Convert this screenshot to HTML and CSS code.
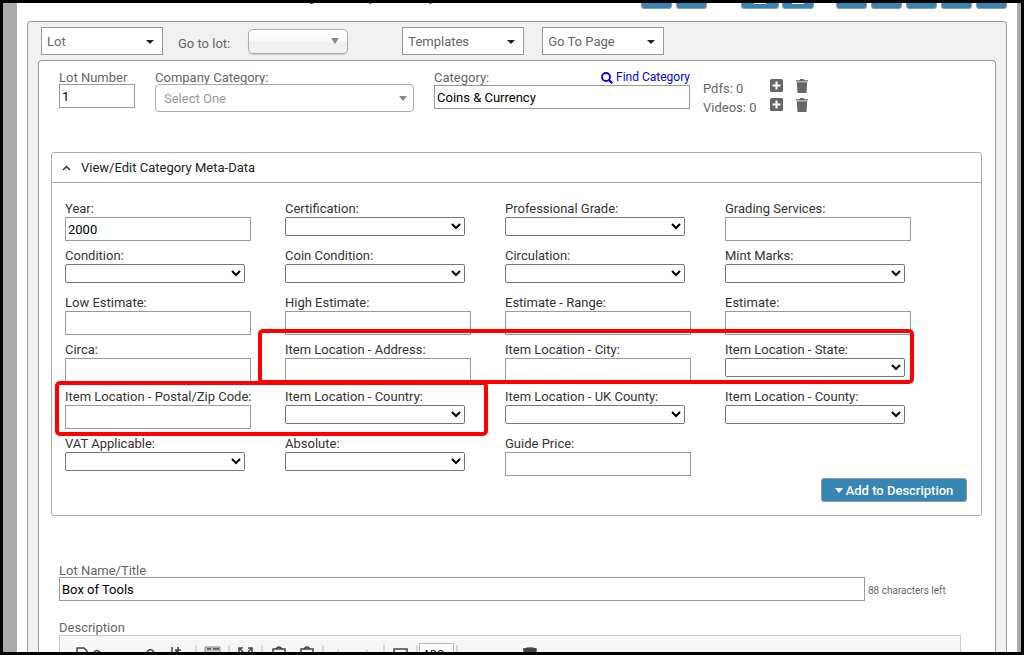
FILE: index.html
```
<!DOCTYPE html>
<html lang="en">
<head>
<meta charset="UTF-8">
<title>Edit Lot</title>
<meta content="width=device-width,initial-scale=1.0" name="viewport">
<link rel="stylesheet" href="styles.css">
</head>
<body>
<svg class="defs" aria-hidden="true">
    <symbol id="i-plus" viewBox="0 0 13 13"><path fill-rule="evenodd" d="M1.5 0h10A1.5 1.5 0 0 1 13 1.500v10a1.500 1.500 0 0 1-1.500 1.500h-10A1.500 1.500 0 0 1 0 11.500v-10A1.500 1.500 0 0 1 1.500 0zM5.500 2.500v3h-3v2h3v3h2v-3h3v-2h-3v-3z"/></symbol>
    <symbol id="i-trash" viewBox="0 0 12 14"><path d="M0 1.200h3.500L4.300 0h3.400l.8 1.200H12v1.300H0zM.8 3.300h10.400L10.500 14h-9z"/></symbol>
</svg>
<div id="page">
    <div id="header">
        <h1>Lot Update (Item 1)</h1>
        <div class="actions">
            <button type="button" aria-label="Previous"></button>
            <button type="button" aria-label="Next"></button>
        </div>
        <div class="actions wide">
            <button type="button" aria-label="Save"><i></i></button>
            <button type="button" aria-label="Copy"><i></i></button>
        </div>
        <div class="actions">
            <button type="button" aria-label="First"></button>
            <button type="button" aria-label="Back"></button>
            <button type="button" aria-label="Forward"></button>
            <button type="button" aria-label="Last"></button>
            <button type="button" aria-label="Close"></button>
        </div>
    </div>
    <div id="outer">
        <div id="toolbar">
            <span class="pick"><select aria-label="Lot"><option>Lot</option></select></span>
            <label for="goto">Go to lot:</label>
            <span class="pick glossy"><select id="goto"><option></option></select></span>
            <span class="pick"><select aria-label="Templates"><option>Templates</option></select></span>
            <span class="pick"><select aria-label="Go To Page"><option>Go To Page</option></select></span>
        </div>
        <div id="inner">
            <div id="top">
                <div class="field number">
                    <label for="lotnum">Lot Number</label>
                    <input type="text" id="lotnum" value="1">
                </div>
                <div class="field company">
                    <label for="company">Company Category:</label>
                    <span class="pick rounded"><select id="company"><option>Select One</option></select></span>
                </div>
                <div class="field category">
                    <div class="line">
                        <label for="category">Category:</label>
                        <a href="#find"><svg width="12" height="12" viewBox="0 0 12 12" fill="none" stroke="currentColor"><circle cx="5" cy="5" r="4" stroke-width="1.800"/><path d="M8 8l3.200 3.200" stroke-width="2.200"/></svg> Find Category</a>
                    </div>
                    <input type="text" id="category" value="Coins &amp; Currency">
                </div>
                <div class="media">
                    <span>Pdfs: 0</span>
                    <button type="button" aria-label="Add pdf"><svg width="13" height="13"><use href="#i-plus"/></svg></button>
                    <button type="button" aria-label="Delete pdfs"><svg width="12" height="14"><use href="#i-trash"/></svg></button>
                    <span>Videos: 0</span>
                    <button type="button" aria-label="Add video"><svg width="13" height="13"><use href="#i-plus"/></svg></button>
                    <button type="button" aria-label="Delete videos"><svg width="12" height="14"><use href="#i-trash"/></svg></button>
                </div>
            </div>

            <div id="meta">
                <button type="button" class="toggle"><svg width="9" height="6" viewBox="0 0 9 6"><path d="M1 5l3.500-3.500L8 5" fill="none" stroke="#333" stroke-width="1.500"/></svg>View/Edit Category Meta-Data</button>
                <div class="body">
                    <div class="grid">
                        <div class="field"><label for="m1">Year:</label><input type="text" id="m1" value="2000"></div>
                        <div class="field"><label for="m2">Certification:</label><select id="m2"></select></div>
                        <div class="field"><label for="m3">Professional Grade:</label><select id="m3"></select></div>
                        <div class="field"><label for="m4">Grading Services:</label><input type="text" id="m4"></div>

                        <div class="field"><label for="m5">Condition:</label><select id="m5"></select></div>
                        <div class="field"><label for="m6">Coin Condition:</label><select id="m6"></select></div>
                        <div class="field"><label for="m7">Circulation:</label><select id="m7"></select></div>
                        <div class="field"><label for="m8">Mint Marks:</label><select id="m8"></select></div>

                        <div class="field"><label for="m9">Low Estimate:</label><input type="text" id="m9"></div>
                        <div class="field"><label for="m10">High Estimate:</label><input type="text" id="m10"></div>
                        <div class="field"><label for="m11">Estimate - Range:</label><input type="text" id="m11"></div>
                        <div class="field"><label for="m12">Estimate:</label><input type="text" id="m12"></div>

                        <div class="field"><label for="m13">Circa:</label><input type="text" id="m13"></div>
                        <div class="field"><label for="m14">Item Location - Address:</label><input type="text" id="m14"></div>
                        <div class="field"><label for="m15">Item Location - City:</label><input type="text" id="m15"></div>
                        <div class="field"><label for="m16">Item Location - State:</label><select id="m16"></select></div>

                        <div class="field"><label for="m17">Item Location - Postal/Zip Code:</label><input type="text" id="m17"></div>
                        <div class="field"><label for="m18">Item Location - Country:</label><select id="m18"></select></div>
                        <div class="field"><label for="m19">Item Location - UK County:</label><select id="m19"></select></div>
                        <div class="field"><label for="m20">Item Location - County:</label><select id="m20"></select></div>

                        <div class="field"><label for="m21">VAT Applicable:</label><select id="m21"></select></div>
                        <div class="field"><label for="m22">Absolute:</label><select id="m22"></select></div>
                        <div class="field"><label for="m23">Guide Price:</label><input type="text" id="m23"></div>

                        <!-- location fields callouts -->
                        <div class="mark mark-a"></div>
                        <div class="mark mark-b"></div>
                    </div>
                    <button type="button" class="add"><i></i>Add to Description</button>
                </div>
            </div>

            <div id="title">
                <label for="lotname">Lot Name/Title</label>
                <div class="line">
                    <input type="text" id="lotname" value="Box of Tools">
                    <small>88 characters left</small>
                </div>
            </div>
            <div id="desc">
                <div class="label">Description</div>
                <div class="editor">
                    <svg width="500" height="24" viewBox="0 0 500 24" fill="none" stroke="#444" stroke-width="1.500">
                        <path d="M17 24V14h7l3 3v7M34 18q3-3 6 0M87 18q3-5 7 0M112 13v11M117 17l-5 5M118 13v6M115 16h6"/>
                        <path d="M136 11v13M169 11v13M202 11v13M263 11v13M324 11v13M357 11v13M397 11v13" stroke="#bbb" stroke-width="1"/>
                        <path d="M145 13h15v11h-15z" fill="#ccc" stroke="#888" stroke-width="1"/>
                        <path d="M147 15h4M153 15h6M179 18v-4h4M188 14h4v4M179 14l4 4M192 14l-4 4M213 18v-3h12v3M216 15q3-4 6 0M241 18v-3h12v3M244 15q3-4 6 0"/>
                        <path d="M278 15v3M307 15v3" stroke="#bbb" stroke-width="1"/>
                        <path d="M334 20v-5h13v5"/>
                        <path d="M464 14v6M465 15q5-2 11 0v6h-11z" fill="#444"/>
                    </svg>
                    <button type="button">ABC</button>
                </div>
            </div>
        </div>
    </div>
</div>
</body>
</html>
```
FILE: styles.css
```
*{
    box-sizing: border-box;
    margin: 0px;
    padding: 0px;
}
body{
    height: 100vh;
    overflow: hidden;
    border: 3px solid #000;
    padding: 0px 4px 0px 14px;
    background: #aaa;
    font-family: Roboto, "Liberation Sans", sans-serif;
    font-size: 13px;
    line-height: 15px;
    color: #666;
}
input,select,button{
    font-family: inherit;
    font-size: 13px;
}
svg{
    display: block;
}
.defs{
    position: absolute;
    width: 0px;
    height: 0px;
}
#page{
    height: 100%;
    display: flex;
    flex-direction: column;
    padding: 0px 10px;
    background: #fff;
}

/* top strip, scrolled mostly out of view */
#header{
    flex: none;
    display: flex;
    align-items: flex-end;
    height: 18px;
    padding-bottom: 12px;
    overflow: hidden;
}
#header h1{
    flex: 1;
    padding: 0px 0px 4px 235px;
    font-size: 20px;
    line-height: 24px;
    color: #555;
    white-space: nowrap;
}
.actions{
    display: flex;
    gap: 4px;
    margin-left: 22px;
}
.actions.wide{
    gap: 3px;
    margin-left: 34px;
}
.actions button{
    width: 31px;
    height: 26px;
    border: 1px solid #999;
    border-radius: 3px;
    background: #3585b5;
}
.actions.wide button{
    width: 32px;
    padding-top: 14px;
}
.actions.wide button:first-child{
    width: 38px;
}
.actions i{
    display: block;
    width: 12px;
    height: 2px;
    margin: 0px auto;
    background: #fff;
}

#outer{
    flex: 1;
    min-height: 0px;
    display: flex;
    flex-direction: column;
    padding: 0px 10px;
    border: 1px solid #999;
    border-bottom: none;
    border-radius: 4px 4px 0px 0px;
    background: #f1f1f1;
}
#toolbar{
    flex: none;
    display: flex;
    align-items: center;
    height: 38px;
    padding: 0px 3px;
}
#toolbar label{
    margin: 5px 18px 0px 15px;
}
.pick{
    position: relative;
    display: block;
    width: 122px;
    height: 28px;
}
.pick select{
    appearance: none;
    display: block;
    width: 100%;
    height: 100%;
    padding: 0px 5px;
    border: 1px solid #999;
    background: #fff;
    color: #666;
}
.pick:after{
    content: "";
    position: absolute;
    right: 9px;
    top: 13px;
    border: 4px solid transparent;
    border-top-color: #222;
    border-bottom: none;
}
.pick + .pick{
    margin-left: 18px;
}
.pick.glossy{
    width: 100px;
    height: 25px;
}
.pick.glossy + .pick{
    margin-left: 54px;
}
.glossy select{
    border-color: #aaa;
    border-radius: 5px;
    background: linear-gradient(#fff 20%, #f6f6f6 50%, #eee 52%, #f4f4f4 100%);
    box-shadow: 0px 1px 1px #ccc;
}
.pick.glossy:after{
    top: 9px;
    border-top: 6px solid #888;
}

#inner{
    flex: 1;
    min-height: 0px;
    display: flex;
    flex-direction: column;
    padding: 9px 13px 0px 12px;
    border: 1px solid #999;
    border-bottom: none;
    border-radius: 4px 4px 0px 0px;
    background: #fff;
}
label,.label{
    display: block;
}
input[type=text]{
    display: block;
    width: 100%;
    height: 24px;
    padding: 0px 2px;
    border: 1px solid #999;
    background: #fff;
    color: #000;
}
.line{
    display: flex;
    justify-content: space-between;
}
#top{
    flex: none;
    display: flex;
    height: 82px;
    padding-left: 8px;
}
.number label,.company label{
    height: 14px;
}
.number{
    width: 76px;
    margin-right: 20px;
}
.company{
    width: 259px;
    margin-right: 20px;
}
.category{
    width: 256px;
    margin-right: 13px;
}
.pick.rounded{
    width: 100%;
}
.rounded select{
    padding: 0px 8px;
    border-color: #aaa;
    border-radius: 4px;
    color: #999;
}
.pick.rounded:after{
    right: 7px;
    top: 12px;
    border-top: 5px solid #888;
}
#top a{
    display: flex;
    align-items: center;
    gap: 3px;
    font-size: 12px;
    color: #00e;
    text-decoration: none;
}
.media{
    display: grid;
    grid-template-columns: 67px 26px 12px;
    grid-auto-rows: 19px;
    padding-top: 9px;
}
.media span{
    padding-top: 2px;
}
.media button{
    display: flex;
    border: none;
    background: none;
}
.media svg{
    fill: #666;
}

#meta{
    flex: none;
    border: 1px solid #aaa;
    border-radius: 3px;
    color: #333;
}
#meta .toggle{
    display: flex;
    align-items: center;
    width: 100%;
    height: 30px;
    padding: 0px 10px;
    gap: 10px;
    border: none;
    border-bottom: 1px solid #aaa;
    background: none;
    color: #222;
}
#meta .body{
    padding: 18px 14px 13px 13px;
}
.grid{
    position: relative;
    display: grid;
    grid-template-columns: repeat(4, 220px);
    grid-auto-rows: 40px;
    row-gap: 7px;
}
.grid label{
    margin-bottom: 1px;
}
.grid input[type=text]{
    width: 186px;
}
.grid select{
    display: block;
    width: 180px;
    height: 19px;
    border: 1px solid #767676;
    border-radius: 2px;
    background: #fff;
}
.mark{
    position: absolute;
    height: 55px;
    border: 4px solid #f00;
    border-radius: 5px;
}
.mark-a{
    left: 193px;
    top: 128px;
    width: 656px;
}
.mark-b{
    left: -10px;
    top: 180px;
    width: 433px;
}
.add{
    display: flex;
    align-items: center;
    justify-content: center;
    gap: 3px;
    width: 146px;
    height: 24px;
    margin: 2px 0px 0px auto;
    border: 1px solid #999;
    border-radius: 3px;
    background: #3585b5;
    color: #fff;
    font-weight: 500;
}
.add i{
    border: 4px solid transparent;
    border-top: 5px solid #fff;
    border-bottom: none;
}

#title{
    flex: none;
    padding: 47px 0px 0px 8px;
}
#title label{
    height: 14px;
}
#title .line{
    justify-content: flex-start;
    gap: 3px;
}
#title input{
    width: 806px;
}
#title small{
    padding-top: 6px;
    font-size: 10px;
    white-space: nowrap;
}
#desc{
    flex: 1;
    min-height: 0px;
    display: flex;
    flex-direction: column;
    padding: 19px 21px 0px 8px;
}
.editor{
    position: relative;
    flex: 1;
    min-height: 0px;
    overflow: hidden;
    border: 1px solid #ccc;
    border-bottom: none;
    background: #f7f7f7;
}
.editor svg{
    margin-top: -2px;
}
.editor button{
    position: absolute;
    left: 359px;
    top: 7px;
    width: 35px;
    height: 22px;
    padding-right: 6px;
    border: 1px solid #bbb;
    background: #fff;
    font-size: 11px;
    color: #000;
}
```
